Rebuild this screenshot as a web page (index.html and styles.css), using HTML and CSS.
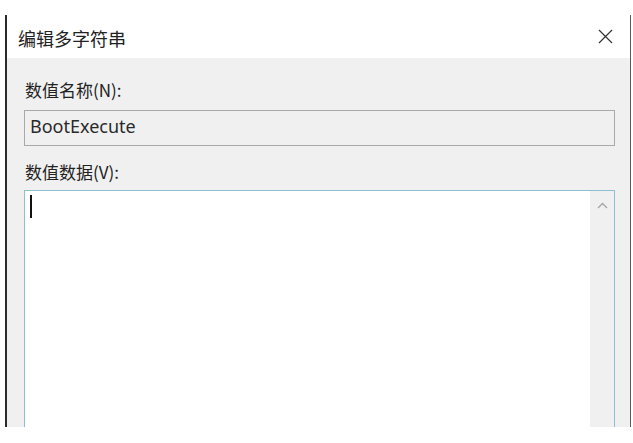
FILE: index.html
```html
<!DOCTYPE html>
<html lang="zh-CN">
<head>
<meta charset="utf-8">
<title>编辑多字符串</title>
<link rel="stylesheet" href="styles.css">
</head>
<body>
<div class="page">
  <div class="dialog">
    <div class="titlebar">
      <span class="title">编辑多字符串</span>
      <span class="close" aria-label="关闭">
        <svg width="15" height="15" viewBox="0 0 15 15"><path d="M1 1L14 14M14 1L1 14" stroke="#333" stroke-width="1.2" fill="none"/></svg>
      </span>
    </div>
    <div class="content">
      <div class="label label-name">数值名称(N):</div>
      <div class="input">BootExecute</div>
      <div class="label label-data">数值数据(V):</div>
      <div class="textarea">
        <div class="text-area-main"><span class="caret"></span></div>
        <div class="scrollbar">
          <svg width="11" height="7" viewBox="0 0 11 7"><path d="M1 6L5.5 1.5L10 6" stroke="#a6a6a6" stroke-width="1.4" fill="none"/></svg>
        </div>
      </div>
    </div>
  </div>
</div>
</body>
</html>
```

FILE: styles.css
```css
html, body {
  margin: 0;
  padding: 0;
  background: #ffffff;
}

.page {
  padding: 15px 0 0 5px;
}

.dialog {
  width: 623px;
  height: 412px;
  border-left: 2px solid #2b2b2b;
  border-right: 1px solid #5a5a5a;
  background: #f0f0f0;
  overflow: hidden;
  font-family: "Noto Sans CJK SC", "Noto Sans", sans-serif;
  color: #222;
}

.titlebar {
  height: 43px;
  background: #ffffff;
  display: flex;
  align-items: center;
  justify-content: space-between;
  padding: 0 17px 0 11px;
}

.title {
  font-size: 18px;
  line-height: 22px;
  padding-top: 3px;
}

.close {
  display: flex;
  width: 15px;
  height: 15px;
}

.content {
  padding: 21px 15px 0 17px;
}

.label {
  font-size: 17px;
  line-height: 22px;
  height: 22px;
  padding-left: 1px;
}

.input {
  margin-top: 9px;
  height: 30px;
  padding: 0 0 4px 5px;
  border: 1px solid #a9a9a9;
  background: #f0f0f0;
  font-family: "Noto Sans", "Open Sans", sans-serif;
  font-size: 18px;
  line-height: 30px;
  color: #2a2a2a;
}

.label-data {
  margin-top: 15px;
}

.textarea {
  margin-top: 7px;
  height: 260px;
  border: 1px solid #8dbfd2;
  display: flex;
  background: #ffffff;
}

.text-area-main {
  flex: 1;
  padding: 4px 0 0 5px;
}

.caret {
  display: block;
  width: 1.5px;
  height: 23px;
  background: #111;
}

.scrollbar {
  width: 24px;
  background: #f0f0f0;
  display: flex;
  justify-content: center;
  align-items: flex-start;
  padding-top: 11px;
  box-sizing: border-box;
}
```
